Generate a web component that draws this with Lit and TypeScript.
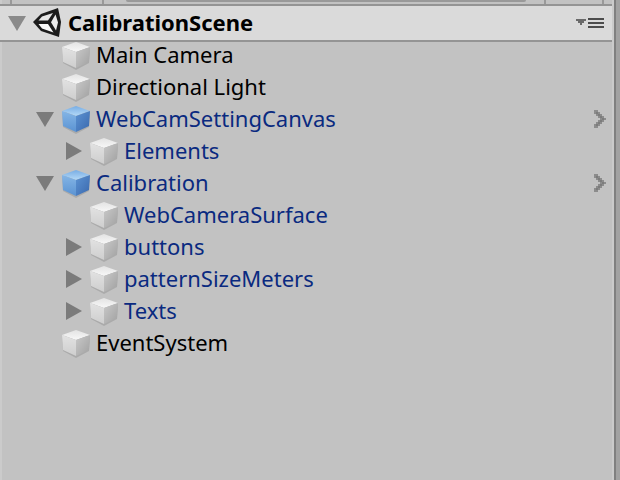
import { LitElement, html, css, svg, nothing } from "lit";
import { customElement, property, state } from "lit/decorators.js";
import { classMap } from "lit/directives/class-map.js";

interface SceneNode {
  name: string;
  depth: number;
  prefab?: boolean;
  root?: boolean;
  foldout?: "open" | "closed";
}

const NODES: SceneNode[] = [
  { name: "Main Camera", depth: 0 },
  { name: "Directional Light", depth: 0 },
  { name: "WebCamSettingCanvas", depth: 0, prefab: true, root: true, foldout: "open" },
  { name: "Elements", depth: 1, prefab: true, foldout: "closed" },
  { name: "Calibration", depth: 0, prefab: true, root: true, foldout: "open" },
  { name: "WebCameraSurface", depth: 1, prefab: true },
  { name: "buttons", depth: 1, prefab: true, foldout: "closed" },
  { name: "patternSizeMeters", depth: 1, prefab: true, foldout: "closed" },
  { name: "Texts", depth: 1, prefab: true, foldout: "closed" },
  { name: "EventSystem", depth: 0 },
];

const openTriangle = svg`<path d="M0 2H18L9 17Z" fill="currentColor"/>`;
const closedTriangle = svg`<path d="M2 0V18L18 9Z" fill="currentColor"/>`;

@customElement("cube-icon")
export class CubeIcon extends LitElement {
  @property({ type: Boolean }) blue = false;

  static styles = css`
    :host { display: block; flex: none; width: 28px; height: 28px; }
    svg { display: block; }
  `;

  render() {
    const c = this.blue
      ? { t1: "#78ade4", t2: "#b4d9f7", l1: "#84b5e6", l2: "#5b93d2", r1: "#5c93d3", r2: "#3a68ad" }
      : { t1: "#e3e3e3", t2: "#f8f8f8", l1: "#e2e2e2", l2: "#cecece", r1: "#c9c9c9", r2: "#a0a0a0" };
    return html`<svg width="28" height="28" viewBox="0 0 28 28" aria-hidden="true">
      <defs>
        <linearGradient id="t" x1="0" y1="0" x2="0" y2="1">
          <stop offset="0" stop-color=${c.t1} /><stop offset="1" stop-color=${c.t2} />
        </linearGradient>
        <linearGradient id="l" x1="0" y1="0" x2="0" y2="1">
          <stop offset="0" stop-color=${c.l1} /><stop offset="1" stop-color=${c.l2} />
        </linearGradient>
        <linearGradient id="r" x1="0" y1="0" x2="1" y2="1">
          <stop offset="0" stop-color=${c.r1} /><stop offset="1" stop-color=${c.r2} />
        </linearGradient>
      </defs>
      <path d="M0 6 1 21 14 28 27 21 28 6Z" fill="#000" opacity="0.12" />
      <path d="M14 0 28 5 14 10 0 5Z" fill="url(#t)" />
      <path d="M0 5 14 10V26L1 20Z" fill="url(#l)" />
      <path d="M28 5 14 10V26L27 20Z" fill="url(#r)" />
    </svg>`;
  }
}

@customElement("app-root")
export class AppRoot extends LitElement {
  @state() private nodes = NODES;

  static styles = css`
    :host {
      display: flex;
      min-height: 100vh;
      background: #a2a2a2;
      font-family: "Noto Sans", "Open Sans", sans-serif;
      font-size: 22px;
      color: #000;
    }
    .panel {
      flex: 1;
      min-width: 0;
      margin-right: 4px;
      background: #c2c2c2;
      border-right: 2px solid #808080;
      box-shadow: inset -2px 0 #cbcbcb, inset 2px 0 #cbcbcb;
    }
    .toolbar {
      display: flex;
      height: 4px;
      margin-left: 10px;
      border-left: 2px solid #999;
    }
    .create { width: 90px; border-right: 2px solid #999; }
    .search {
      flex: 1;
      height: 2px;
      margin: 0 18px 0 22px;
      background: #999;
      border-radius: 0 0 8px 8px;
    }
    .tool { width: 56px; border-left: 2px solid #999; border-right: 2px solid #999; margin-right: 10px; }
    .header {
      display: flex;
      align-items: center;
      height: 34px;
      padding: 0 8px;
      margin-right: 2px;
      background: #dadada;
      border-top: 2px solid #949494;
      border-bottom: 2px solid #949494;
    }
    .title {
      flex: 1;
      align-self: flex-start;
      margin: 0 0 0 6px;
      font-size: 22px;
      line-height: 32px;
      font-weight: 700;
    }
    button {
      display: block;
      flex: none;
      padding: 0;
      border: 0;
      background: none;
      color: #7b7b7b;
    }
    svg { display: block; }
    .fold { width: 18px; height: 18px; }
    .logo { margin-left: 7px; flex: none; }
    .header .fold { color: #8a8a8a; }
    .tree {
      display: flex;
      flex-direction: column;
      gap: 6px;
      margin: 0;
      padding: 0 8px 0 36px;
      list-style: none;
    }
    .row { display: flex; align-items: center; height: 26px; }
    .child { padding-left: 28px; }
    .gap { flex: none; width: 18px; }
    cube-icon { align-self: flex-start; margin: 0 6px 0 8px; }
    .name { flex: 1; align-self: flex-start; line-height: 24px; white-space: nowrap; }
    .prefab .name { color: #0a2a80; }
  `;

  private toggle(i: number) {
    this.nodes = this.nodes.map((n, k) =>
      k === i ? { ...n, foldout: n.foldout === "open" ? "closed" : "open" } : n
    );
  }

  private row(n: SceneNode, i: number) {
    return html`<li class=${classMap({ row: true, child: n.depth > 0, prefab: !!n.prefab })}>
      ${n.foldout
        ? html`<button class="fold" aria-label="Toggle ${n.name}" @click=${() => this.toggle(i)}>
            <svg width="18" height="18">${n.foldout === "open" ? openTriangle : closedTriangle}</svg>
          </button>`
        : html`<span class="gap"></span>`}
      <cube-icon ?blue=${!!n.root}></cube-icon>
      <span class="name">${n.name}</span>
      ${n.root
        ? html`<button aria-label="Open ${n.name}">
            <svg width="12" height="18" shape-rendering="crispEdges">
              <path
                d="M0 0H4V2H6V4H8V6H10V8H12V10H10V12H8V14H6V16H4V18H0V14H2V12H4V10H6V8H4V6H2V4H0Z"
                fill="#8c8c8c"
              />
              <path d="M2 2H4V4H6V6H8V8H10V10H8V12H6V14H4V16H2V14H4V12H6V10H8V8H6V6H4V4H2Z" fill="#7c7c7c" />
            </svg>
          </button>`
        : nothing}
    </li>`;
  }

  render() {
    return html`<main class="panel">
      <div class="toolbar">
        <div class="create"></div>
        <div class="search"></div>
        <div class="tool"></div>
      </div>
      <header class="header">
        <button class="fold" aria-label="Toggle scene"><svg width="18" height="18">${openTriangle}</svg></button>
        <svg class="logo" width="29" height="30" viewBox="0 0 29 30" aria-hidden="true">
          <path d="M0 14 8 6 25 0 28 14 26 29 8 23Z" fill="#1c1c1c" />
          <path d="M9 8.500 20 5 15 12.500H5.500Z" fill="#e6e6e6" />
          <path d="M5.500 16H15L20.500 24.500 9 20.500Z" fill="#fafafa" />
          <path d="M22.500 6.500 25 14.500 23 22.500 18 14.200Z" fill="#ececec" />
        </svg>
        <h1 class="title">CalibrationScene</h1>
        <button aria-label="Scene menu">
          <svg width="28" height="18">
            <path d="M0 5H10V7H8V9H6V11H4V9H2V7H0Z" fill="#6a6a6a" />
            <path d="M12 5H28M12 9H28M12 13H28" stroke="#4c4c4c" stroke-width="2" />
          </svg>
        </button>
      </header>
      <ul class="tree">${this.nodes.map((n, i) => this.row(n, i))}</ul>
    </main>`;
  }
}
